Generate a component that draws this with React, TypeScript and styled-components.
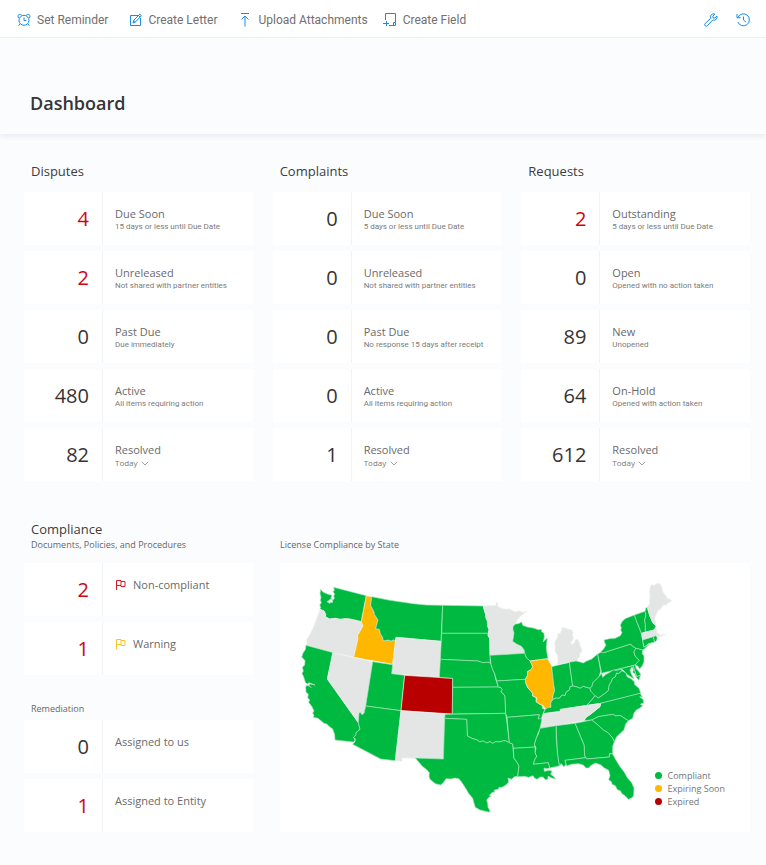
import React from "react";
import styled, { createGlobalStyle } from "styled-components";

const GlobalStyle = createGlobalStyle`
  *, *::before, *::after { box-sizing: border-box; }
  body {
    margin: 0;
    background: #fbfcfe;
    color: #333;
    font-family: "Open Sans", "Noto Sans", sans-serif;
  }
  button, select { font: inherit; color: inherit; }
  h1, h2, h3, p, ul { margin: 0; padding: 0; }
`;

const Toolbar = styled.header`
  display: flex;
  align-items: center;
  height: 38px;
  padding: 2px 15px 0 17px;
  background: #fff;
  border-bottom: 1px solid #eff1f3;
`;

const ToolButton = styled.button<{ $after?: number }>`
  display: flex;
  align-items: center;
  gap: 6px;
  margin: 0 ${(p) => p.$after ?? 0}px 0 0;
  padding: 0;
  border: 0;
  background: none;
  color: #707070;
  font-family: Roboto, sans-serif;
  font-size: 12px;
  line-height: 16px;
  white-space: nowrap;
  cursor: pointer;
`;

const Icon = styled.svg`
  display: block;
  flex: none;
  fill: none;
  stroke: #1a8ae6;
  stroke-width: 1;
`;

const Tools = styled.div`
  display: flex;
  gap: 18px;
  margin-left: auto;
`;

const TitleBar = styled.div`
  padding: 51px 30px 17px;
  box-shadow: 0 2px 6px #e6e9ef;
`;

const PageTitle = styled.h1`
  font-size: 18px;
  line-height: 28px;
  font-weight: 600;
  color: #353535;
`;

const Content = styled.main`
  padding: 27px 16px 32px 24px;
`;

const Columns = styled.div`
  display: grid;
  grid-template-columns: repeat(3, minmax(0, 1fr));
  gap: 20px;
`;

const Heading = styled.h2`
  padding-left: 7px;
  font-size: 13px;
  line-height: 20px;
  font-weight: 400;
  color: #3c3c3c;
`;

const SubHeading = styled.h3`
  padding-left: 7px;
  font-size: 9px;
  line-height: 12px;
  font-weight: 400;
  color: #666;
`;

const Cards = styled.div<{ $top: number }>`
  display: grid;
  gap: 6px;
  margin-top: ${(p) => p.$top}px;
`;

const Card = styled.article`
  display: grid;
  grid-template-columns: 79px minmax(0, 1fr);
  min-height: 53px;
  background: #fff;
`;

const Count = styled.div<{ $alert?: boolean }>`
  display: flex;
  align-items: center;
  justify-content: flex-end;
  padding-right: 13px;
  border-right: 1px solid #f2f3f5;
  font-size: 20px;
  line-height: 26px;
  color: ${(p) => (p.$alert ? "#cc0610" : "#383332")};
`;

const Details = styled.div`
  padding: 13px 0 0 12px;
`;

const Label = styled.div`
  display: flex;
  align-items: center;
  gap: 7px;
  font-size: 11px;
  line-height: 17px;
  color: #6a6a6a;
`;

const Note = styled.p`
  font-family: Roboto, sans-serif;
  font-size: 8px;
  line-height: 10px;
  color: #7b7b7b;
  white-space: nowrap;
`;

const Period = styled.div`
  display: flex;
  align-items: center;
  gap: 3px;
  font-size: 8px;
  line-height: 10px;
  color: #777;
`;

const PeriodSelect = styled.select`
  appearance: none;
  width: 23px;
  height: 10px;
  padding: 0;
  border: 0;
  background: none;
  line-height: 10px;
`;

const Lower = styled.div`
  display: grid;
  grid-template-columns: minmax(0, 229fr) minmax(0, 470fr);
  column-gap: 27px;
  margin-top: 38px;
`;

const Remediation = styled.section`
  margin-top: 28px;
`;

const MapSection = styled.section`
  display: flex;
  flex-direction: column;
  padding-top: 20px;
`;

const MapTitle = styled.h2`
  font-size: 9px;
  line-height: 12px;
  font-weight: 400;
  color: #666;
`;

const MapPanel = styled.div`
  position: relative;
  margin-top: 12px;
  background: #fff;
`;

const MapDrawing = styled.svg`
  display: block;
  width: 100%;
  height: auto;
`;

const Legend = styled.ul`
  position: absolute;
  right: 25px;
  bottom: 24px;
  list-style: none;
`;

const LegendItem = styled.li<{ $color: string }>`
  display: flex;
  align-items: center;
  gap: 6px;
  font-size: 9px;
  line-height: 13px;
  color: #757575;
  &::before {
    content: "";
    width: 7px;
    height: 7px;
    border-radius: 50%;
    background: ${(p) => p.$color};
  }
`;

type Item = { count: number; label: string; note?: string; alert?: boolean; flag?: string };

const groups: { title: string; items: Item[] }[] = [
  {
    title: "Disputes",
    items: [
      { count: 4, label: "Due Soon", note: "15 days or less until Due Date", alert: true },
      { count: 2, label: "Unreleased", note: "Not shared with partner entities", alert: true },
      { count: 0, label: "Past Due", note: "Due immediately" },
      { count: 480, label: "Active", note: "All items requiring action" },
      { count: 82, label: "Resolved" },
    ],
  },
  {
    title: "Complaints",
    items: [
      { count: 0, label: "Due Soon", note: "5 days or less until Due Date" },
      { count: 0, label: "Unreleased", note: "Not shared with partner entities" },
      { count: 0, label: "Past Due", note: "No response 15 days after receipt" },
      { count: 0, label: "Active", note: "All items requiring action" },
      { count: 1, label: "Resolved" },
    ],
  },
  {
    title: "Requests",
    items: [
      { count: 2, label: "Outstanding", note: "5 days or less until Due Date", alert: true },
      { count: 0, label: "Open", note: "Opened with no action taken" },
      { count: 89, label: "New", note: "Unopened" },
      { count: 64, label: "On-Hold", note: "Opened with action taken" },
      { count: 612, label: "Resolved" },
    ],
  },
];

const compliance: Item[] = [
  { count: 2, label: "Non-compliant", alert: true, flag: "#cc0610" },
  { count: 1, label: "Warning", alert: true, flag: "#fbbc12" },
];

const remediation: Item[] = [
  { count: 0, label: "Assigned to us" },
  { count: 1, label: "Assigned to Entity", alert: true },
];

const GREEN = "#00b940";
const AMBER = "#ffb700";
const RED = "#b80000";
const GREY = "#e4e5e5";

const states: [string, string, string][] = [
  ["WA", GREEN, "122,79 129,87 142,93 156,97 153,106 158,109 151,108 148,112 141,116 149,121 153,118 157,119 158,112 163,106 161,99 164,93 159,86 163,82 161,73 259,98 244,176 210,168 195,167 180,169 166,166 148,168 136,161 137,154 132,144 120,139 122,133 119,126 124,119 121,112 123,103 120,92"],
  ["OR", GREY, "120,139 132,144 137,154 136,161 148,168 166,166 180,169 195,167 210,168 244,176 249,189 240,204 232,219 234,226 221,283 158,269 78,247 81,240 79,231 90,213 101,191 111,164"],
  ["ID", AMBER, "259,98 275,101 272,127 282,147 283,154 294,171 287,197 298,199 301,212 308,223 309,232 314,233 324,231 334,234 342,230 347,234 338,304 221,283 234,226 232,219 249,189 244,176"],
  ["MT", GREEN, "275,101 330,112 400,122 440,126 488,127 483,235 348,223 346,234 342,230 334,234 324,231 314,233 309,232 308,223 301,212 298,199 287,197 294,171 283,154 282,147 272,127"],
  ["WY", GREY, "348,223 483,235 478,343 335,332"],
  ["CA", GREEN, "78,247 160,269 142,348 235,479 240,497 234,505 228,509 228,515 221,523 225,532 220,537 165,531 164,515 158,498 147,490 140,483 132,481 124,474 114,466 100,463 102,457 98,450 102,444 95,430 86,418 89,410 83,405 85,393 78,388 77,371 81,367 90,370 94,374 86,368 91,363 105,366 92,361 86,359 82,364 76,358 71,342 66,331 70,324 67,313 74,306 75,293 69,286 65,283 69,270 76,260"],
  ["NV", GREY, "158,269 278,296 260,411 252,451 246,455 242,449 236,449 235,479 142,348"],
  ["UT", GREEN, "278,296 338,305 335,332 374,337 363,443 257,429"],
  ["AZ", GREEN, "257,429 363,443 346,593 302,588 218,544 225,537 226,528 221,523 228,515 228,509 240,499 235,479 237,449 242,449 246,455 252,451"],
  ["CO", RED, "374,337 518,346 517,453 363,443"],
  ["NM", GREY, "363,443 495,453 490,588 366,585 366,595 346,593"],
  ["ND", GREEN, "488,127 610,129 613,143 617,154 618,166 622,174 623,190 627,200 625,211 485,211"],
  ["SD", GREEN, "485,211 625,211 624,218 629,226 630,276 631,285 630,294 633,304 627,298 618,298 608,299 594,294 481,289"],
  ["NE", GREEN, "481,289 594,294 608,299 618,298 627,298 633,304 638,320 644,332 646,345 655,372 518,373 518,346 478,343"],
  ["KS", GREEN, "518,373 655,372 663,374 667,380 663,386 670,393 675,399 677,451 517,453"],
  ["OK", GREEN, "495,454 677,451 681,481 688,539 676,533 668,534 657,537 647,536 638,541 630,536 620,540 610,534 598,536 590,530 578,527 562,519 560,469 494,466"],
  ["TX", GREEN, "494,466 560,469 562,519 578,527 590,530 598,536 610,534 620,540 630,536 638,541 647,536 657,537 668,534 676,533 688,539 698,543 700,568 702,586 711,598 717,609 713,640 703,641 695,649 684,645 686,657 678,666 666,673 657,673 655,679 643,681 643,688 637,688 628,697 634,699 627,703 620,711 623,720 624,733 629,741 629,748 616,745 600,741 586,733 581,717 578,706 565,690 560,681 550,665 543,655 536,647 525,645 512,648 498,647 491,658 482,666 466,662 450,649 447,640 448,629 440,620 427,610 406,585 490,588"],
  ["MN", GREY, "610,129 648,127 648,118 653,120 654,131 665,136 680,139 687,137 695,142 705,146 718,143 727,148 742,145 730,152 718,163 710,175 706,183 699,191 702,210 699,219 698,235 710,243 724,250 732,260 734,271 630,277 629,226 624,218 627,200 623,190 622,174 618,166 617,154 613,143"],
  ["WI", GREEN, "706,183 715,182 725,177 728,187 742,192 760,195 775,200 784,199 785,206 792,211 793,221 790,237 795,231 802,225 800,240 799,256 801,270 804,287 750,294 738,283 734,271 732,260 724,250 710,243 698,235 702,210 699,200 699,191"],
  ["IA", GREEN, "630,277 734,271 738,283 750,294 757,301 758,311 753,320 742,326 743,337 736,349 650,354 644,332 638,320 633,304"],
  ["MO", GREEN, "650,354 736,349 738,362 744,375 752,382 758,391 757,398 768,404 768,416 780,424 787,428 787,436 795,440 790,449 788,456 782,470 774,468 778,455 681,463 677,451 675,399 667,389 663,386 667,380 663,374 655,372"],
  ["IL", AMBER, "750,294 803,287 810,300 815,308 819,340 821,365 824,382 819,398 818,410 812,420 813,433 804,433 797,440 790,428 780,424 768,416 771,405 757,398 758,391 744,375 738,362 736,349 743,337 742,326 753,320 758,311"],
  ["IN", GREEN, "815,311 868,298 878,369 870,371 869,380 858,388 855,398 846,396 838,406 828,405 818,410 819,398 824,382 821,365"],
  ["MI", GREY, "830,305 834,296 833,280 825,264 826,252 824,240 827,231 833,222 834,211 840,212 845,201 846,193 858,195 864,199 876,201 879,210 878,218 881,226 873,239 874,244 882,241 886,230 893,229 898,237 901,250 906,259 904,269 899,271 900,280 894,287 892,294 868,298"],
  ["OH", GREEN, "868,298 888,294 900,297 910,300 920,294 935,288 953,273 958,301 962,325 957,341 946,352 938,360 936,370 930,376 918,373 910,370 900,376 889,371 878,369"],
  ["PA", GREEN, "953,273 970,264 971,269 1052,243 1057,249 1068,256 1062,266 1064,276 1068,283 1078,292 1072,300 1065,306 965,331"],
  ["NY", GREEN, "961,268 970,259 978,246 974,239 972,231 988,227 1005,226 1021,218 1026,209 1022,200 1024,195 1021,186 1026,176 1035,167 1063,156 1069,171 1072,181 1078,195 1084,211 1088,231 1091,252 1108,244 1093,258 1088,261 1068,256 1057,249 1052,243 971,269"],
  ["VT", GREEN, "1063,156 1095,145 1098,156 1094,171 1096,184 1096,207 1084,211 1078,195 1072,181"],
  ["NH", GREEN, "1095,145 1098,134 1102,133 1109,158 1119,180 1128,189 1122,201 1096,207 1096,184 1094,171 1098,156"],
  ["ME", GREY, "1102,133 1109,121 1108,111 1110,101 1108,87 1111,69 1117,64 1121,68 1133,60 1143,65 1150,90 1157,96 1163,107 1170,108 1175,114 1162,122 1158,127 1150,126 1142,138 1133,143 1130,153 1126,159 1124,170 1128,179 1128,189 1119,180 1109,158"],
  ["MA", GREY, "1085,211 1122,201 1128,196 1132,202 1129,208 1137,212 1142,217 1150,216 1148,211 1156,216 1148,219 1137,222 1132,221 1128,218 1088,230"],
  ["CT", GREEN, "1088,231 1120,221 1124,237 1105,242 1092,253"],
  ["RI", GREEN, "1120,221 1128,218 1132,225 1129,234 1124,237"],
  ["NJ", GREEN, "1068,256 1088,261 1087,273 1092,278 1092,296 1087,308 1079,318 1074,310 1066,305 1078,292 1068,283 1064,276 1062,266"],
  ["DE", GREEN, "1059,308 1066,305 1068,316 1076,325 1083,336 1070,341"],
  ["MD", GREEN, "1005,321 1059,308 1070,341 1081,337 1077,352 1068,342 1065,333 1058,328 1061,320 1056,312 1050,321 1054,333 1062,347 1053,342 1043,336 1038,330 1028,320 1020,318 1008,332"],
  ["WV", GREEN, "965,331 968,343 978,334 987,329 1000,321 1013,323 1020,318 1026,323 1016,332 1010,330 1006,342 998,346 994,356 988,365 985,383 974,392 955,405 940,396 931,383 930,376 936,370 938,360 946,352 957,341"],
  ["KY", GREEN, "795,440 804,433 813,433 812,420 818,410 828,405 838,406 846,396 855,398 858,388 869,380 870,371 878,369 889,371 900,376 910,370 918,373 930,376 931,383 945,398 936,410 920,427 840,439 842,445 790,452"],
  ["VA", GREEN, "1026,323 1038,330 1041,341 1053,347 1063,356 1064,365 1073,372 1078,378 1082,391 962,421 920,427 936,410 945,398 955,405 974,392 985,383 988,365 994,356 998,346 1006,342 1010,330 1016,332"],
  ["NC", GREEN, "962,421 1080,391 1087,402 1079,401 1090,410 1091,419 1081,424 1088,428 1079,436 1070,440 1062,450 1058,466 1045,473 1020,457 1005,459 1001,454 985,456 955,461 935,471 912,473 918,463 930,455 945,443 960,431"],
  ["TN", GREY, "790,452 842,445 840,440 962,421 960,431 945,443 930,455 918,463 912,473 780,496 786,476"],
  ["SC", GREEN, "935,471 955,461 985,456 1001,454 1005,459 1020,457 1045,473 1037,483 1032,500 1020,512 1010,521 1003,536 997,524 985,510 970,501 955,487"],
  ["GA", GREEN, "885,481 935,471 955,487 970,501 985,510 997,524 1003,536 998,550 998,573 989,572 988,582 920,588 914,579 912,546"],
  ["AL", GREEN, "828,488 885,481 912,546 914,579 918,584 855,592 858,605 851,611 844,602 838,609 832,570"],
  ["MS", GREEN, "780,496 828,488 829,530 832,570 838,609 822,612 809,615 805,599 760,604 763,591 770,580 765,570 768,555 763,544 768,527 776,511"],
  ["AR", GREEN, "681,463 778,455 774,468 786,466 784,478 780,496 774,511 768,527 763,544 765,552 700,556 698,543 688,539"],
  ["LA", GREEN, "700,556 765,552 765,570 770,580 763,591 760,604 805,599 809,615 801,617 792,615 793,625 807,622 816,624 812,634 822,641 827,648 813,644 804,639 804,648 796,650 789,642 781,642 771,649 764,646 759,638 746,643 733,640 713,641 717,609 711,598 702,586"],
  ["FL", GREEN, "855,592 918,584 920,588 988,582 989,572 998,573 1006,588 1020,611 1032,626 1042,644 1055,659 1062,675 1061,698 1055,705 1045,709 1035,698 1026,692 1021,683 1012,680 1006,668 996,664 995,657 986,650 990,638 986,622 973,615 963,606 946,600 932,608 926,615 918,615 910,606 895,602 874,604 860,609"],
];

function StateMap() {
  return (
    <MapDrawing viewBox="0 0 1410 807" role="img" aria-label="License compliance by state">
      {states.map(([code, color, points]) => (
        <polygon
          key={code}
          points={points}
          fill={color}
          stroke={color === GREEN ? "#a5e5b8" : "#eef3ee"}
          strokeWidth="2"
          strokeLinejoin="round"
        />
      ))}
    </MapDrawing>
  );
}

const AlarmIcon = () => (
  <Icon width="14" height="14" viewBox="0 0 14 14" aria-hidden="true">
    <circle cx="7" cy="7.3" r="5" />
    <path d="M7 4.4v3.2h2.4M3.2 10.8l-1.7 2M10.8 10.8l1.7 2M1.7 5C-.2 2.3 2.3.2 4.6 2M12.3 5C14.2 2.3 11.7.2 9.4 2" />
  </Icon>
);

const EditIcon = () => (
  <Icon width="13" height="14" viewBox="0 0 13 14" aria-hidden="true">
    <path d="M9 2.5H1.5v10h10V5M4 10l.7-2.6 6-6.2 1.7 1.5-6 6.3zM4.7 7.4l1.7 1.6M9.5 2.5l1.6 1.5" />
  </Icon>
);

const UploadIcon = () => (
  <Icon width="14" height="14" viewBox="0 0 14 14" aria-hidden="true">
    <path d="M3 .5h8M7 13.5V3M3.5 6.5L7 3l3.5 3.5" />
  </Icon>
);

const FieldIcon = () => (
  <Icon width="14" height="14" viewBox="0 0 14 14" aria-hidden="true">
    <path d="M2.5 7V.5h10V9M6 12.5h6.5V9.5h-2v3M3.5 8v5M0 10.5h6" />
  </Icon>
);

const WrenchIcon = () => (
  <Icon width="14" height="14" viewBox="0 0 14 14" aria-hidden="true">
    <path d="M10.8 1A3.2 3.2 0 0 0 6.7 5.3L1.1 10.6a1.5 1.5 0 0 0 2.3 2.1L8.8 7A3.2 3.2 0 0 0 13 3.1L10.9 5 9 4.9 8.8 3.2z" />
  </Icon>
);

const HistoryIcon = () => (
  <Icon width="15" height="14" viewBox="0 0 15 14" aria-hidden="true">
    <path d="M2 4.2A6 6 0 1 1 1.8 9M1 1v3.7h3.7M7.5 3.5V7l2.5 2.2" />
  </Icon>
);

const Flag = ({ color }: { color: string }) => (
  <svg width="11" height="11" viewBox="0 0 11 11" fill="none" stroke={color} strokeWidth=".9" aria-hidden="true">
    <path d="M1.5 11V1.5h4.5v5H1.5M6 2.5h4v5H6v-1" />
  </svg>
);

function StatCard({ item, period }: { item: Item; period?: string }) {
  return (
    <Card>
      <Count $alert={item.alert}>{item.count}</Count>
      <Details>
        <Label>
          {item.flag && <Flag color={item.flag} />}
          {item.label}
        </Label>
        {item.note && <Note>{item.note}</Note>}
        {period && (
          <Period>
            <PeriodSelect aria-label={period} defaultValue="Today">
              <option>Today</option>
            </PeriodSelect>
            <svg width="8" height="5" viewBox="0 0 8 5" fill="none" stroke="#888" strokeWidth=".8" aria-hidden="true">
              <path d="M.8.8L4 4 7.2.8" />
            </svg>
          </Period>
        )}
      </Details>
    </Card>
  );
}

export default function App() {
  return (
    <>
      <GlobalStyle />
      <Toolbar>
        <ToolButton $after={21}><AlarmIcon />Set Reminder</ToolButton>
        <ToolButton $after={21}><EditIcon />Create Letter</ToolButton>
        <ToolButton $after={15}><UploadIcon />Upload Attachments</ToolButton>
        <ToolButton><FieldIcon />Create Field</ToolButton>
        <Tools>
          <ToolButton aria-label="Settings"><WrenchIcon /></ToolButton>
          <ToolButton aria-label="History"><HistoryIcon /></ToolButton>
        </Tools>
      </Toolbar>
      <TitleBar>
        <PageTitle>Dashboard</PageTitle>
      </TitleBar>
      <Content>
        <Columns>
          {groups.map((group) => (
            <section key={group.title}>
              <Heading>{group.title}</Heading>
              <Cards $top={11}>
                {group.items.map((item) => (
                  <StatCard
                    key={item.label}
                    item={item}
                    period={item.note ? undefined : `${group.title} resolved period`}
                  />
                ))}
              </Cards>
            </section>
          ))}
        </Columns>
        <Lower>
          <div>
            <section>
              <Heading>Compliance</Heading>
              <SubHeading>Documents, Policies, and Procedures</SubHeading>
              <Cards $top={12}>
                {compliance.map((item) => <StatCard key={item.label} item={item} />)}
              </Cards>
            </section>
            <Remediation>
              <SubHeading>Remediation</SubHeading>
              <Cards $top={5}>
                {remediation.map((item) => <StatCard key={item.label} item={item} />)}
              </Cards>
            </Remediation>
          </div>
          <MapSection>
            <MapTitle>License Compliance by State</MapTitle>
            <MapPanel>
              <StateMap />
              <Legend>
                <LegendItem $color={GREEN}>Compliant</LegendItem>
                <LegendItem $color={AMBER}>Expiring Soon</LegendItem>
                <LegendItem $color={RED}>Expired</LegendItem>
              </Legend>
            </MapPanel>
          </MapSection>
        </Lower>
      </Content>
    </>
  );
}
